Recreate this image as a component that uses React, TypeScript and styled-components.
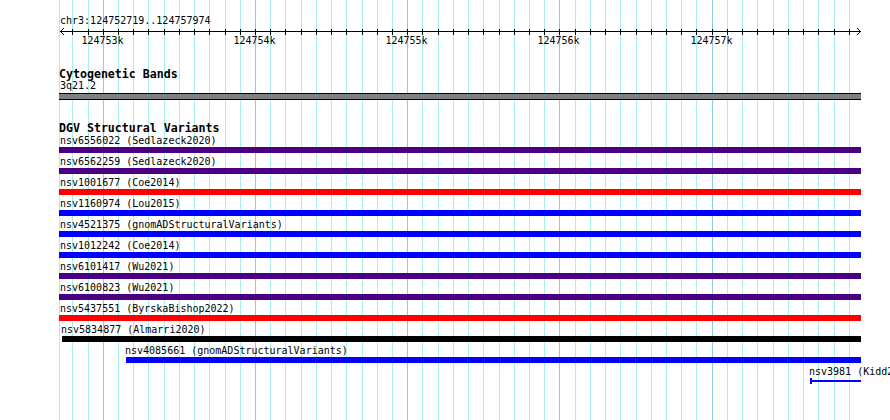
import React from 'react';
import styled, { createGlobalStyle } from 'styled-components';

const VIEW_START = 124752719;
const VIEW_END = 124757974;
const TRACK_LEFT = 59;
const TRACK_WIDTH = 802;
const PAGE_W = 890;
const PAGE_H = 420;
const SCALE = 800 / (VIEW_END - VIEW_START);

// page x (px) of a base position
const toX = (bp: number) => Math.round(60 + (bp - VIEW_START) * SCALE);

const gridStops: number[] = [];
for (let bp = Math.ceil(VIEW_START / 100) * 100; bp < VIEW_END; bp += 100) gridStops.push(bp);

type Variant = {
  id: string;
  study: string;
  color: string;
  start?: number;
  thin?: boolean;
};

const variants: Variant[] = [
  { id: 'nsv6556022', study: 'Sedlazeck2020', color: '#4b0082' },
  { id: 'nsv6562259', study: 'Sedlazeck2020', color: '#4b0082' },
  { id: 'nsv1001677', study: 'Coe2014', color: '#ff0000' },
  { id: 'nsv1160974', study: 'Lou2015', color: '#0000ff' },
  { id: 'nsv4521375', study: 'gnomADStructuralVariants', color: '#0000ff' },
  { id: 'nsv1012242', study: 'Coe2014', color: '#0000ff' },
  { id: 'nsv6101417', study: 'Wu2021', color: '#4b0082' },
  { id: 'nsv6100823', study: 'Wu2021', color: '#4b0082' },
  { id: 'nsv5437551', study: 'ByrskaBishop2022', color: '#ff0000' },
  { id: 'nsv5834877', study: 'Almarri2020', color: '#000000', start: 124752732 },
  { id: 'nsv4085661', study: 'gnomADStructuralVariants', color: '#0000ff', start: 124753153 },
  { id: 'nsv3981', study: 'Kidd2008', color: '#0000ff', start: 124757646, thin: true },
];

const GlobalStyle = createGlobalStyle`
  html, body {
    margin: 0;
    padding: 0;
    background: #fff;
    overflow: hidden;
  }
`;

const Page = styled.div`
  position: relative;
  width: ${PAGE_W}px;
  height: ${PAGE_H}px;
  overflow: hidden;
  background: #fff;
  font-family: 'DejaVu Sans Mono', 'Liberation Mono', monospace;
  color: #000;
`;

const GridLayer = styled.svg`
  position: absolute;
  left: 0;
  top: 0;
  z-index: 0;
`;

const Column = styled.div`
  position: relative;
  z-index: 1;
  display: flex;
  flex-direction: column;
  padding-left: ${TRACK_LEFT}px;
`;

const Locus = styled.div`
  padding: 15px 0 0 1px;
  font-size: 10px;
  line-height: 12px;
  white-space: nowrap;
`;

const RulerSvg = styled.svg`
  display: block;
  overflow: visible;

  text {
    font-family: 'DejaVu Sans Mono', 'Liberation Mono', monospace;
    font-size: 10px;
    fill: #000;
  }
`;

const Track = styled.section<{ $gap: number }>`
  display: flex;
  flex-direction: column;
  margin-top: ${(p) => p.$gap}px;
`;

const TrackTitle = styled.div`
  font-size: 11.6px;
  font-weight: bold;
  line-height: 12px;
  white-space: nowrap;
`;

const Label = styled.div`
  font-size: 10px;
  line-height: 12px;
  white-space: nowrap;
`;

const Band = styled.div`
  margin-top: 1px;
  width: ${TRACK_WIDTH}px;
  height: 5px;
  background: #808080;
  border-top: 1px solid #000;
  border-bottom: 1px solid #000;
`;

const FeatureList = styled.div`
  display: flex;
  flex-direction: column;
  margin-top: 1px;
`;

const FeatureRow = styled.div`
  display: flex;
  flex-direction: column;
  margin-bottom: 3px;
`;

const Bar = styled.div<{ $color: string; $thin?: boolean }>`
  height: 6px;
  background: ${(p) =>
    p.$thin
      ? `linear-gradient(${p.$color}, ${p.$color}) left top / 2px 100% no-repeat,
         linear-gradient(${p.$color}, ${p.$color}) left center / 100% 2px no-repeat`
      : p.$color};
`;

const Grid: React.FC = () => (
  <GridLayer width={PAGE_W} height={PAGE_H}>
    <rect x={TRACK_LEFT} y={0} width={1} height={PAGE_H} fill="#aaeeee" />
    {gridStops.map((bp) => (
      <rect
        key={bp}
        x={toX(bp)}
        y={0}
        width={1}
        height={PAGE_H}
        fill={bp % 1000 === 0 ? '#88ccee' : '#aaeeee'}
      />
    ))}
  </GridLayer>
);

const Ruler: React.FC = () => {
  const end = TRACK_WIDTH;
  return (
    <RulerSvg width={TRACK_WIDTH + 2} height={20}>
      <line x1={1} y1={4.5} x2={end} y2={4.5} stroke="#000" />
      <polyline points="5,1 1.5,4.5 5,8" fill="none" stroke="#000" />
      <polyline points={`${end - 4},1 ${end - 0.5},4.5 ${end - 4},8`} fill="none" stroke="#000" />
      {gridStops.map((bp) => {
        const x = toX(bp) - TRACK_LEFT + 0.5;
        return (
          <g key={bp}>
            <line x1={x} y1={2} x2={x} y2={8} stroke="#000" />
            {bp % 1000 === 0 && (
              <text x={x - 1} y={17} textAnchor="middle">
                {bp / 1000}k
              </text>
            )}
          </g>
        );
      })}
    </RulerSvg>
  );
};

const App: React.FC = () => (
  <>
    <GlobalStyle />
    <Page>
      <Grid />
      <Column>
        <Locus>
          chr3:{VIEW_START}..{VIEW_END}
        </Locus>
        <Ruler />

        <Track $gap={21}>
          <TrackTitle>Cytogenetic Bands</TrackTitle>
          <Label style={{ paddingLeft: 1 }}>3q21.2</Label>
          <Band />
        </Track>

        <Track $gap={22}>
          <TrackTitle>DGV Structural Variants</TrackTitle>
          <FeatureList>
            {variants.map((v) => {
              const offset = v.start ? toX(v.start) - TRACK_LEFT : 0;
              return (
                <FeatureRow key={v.id}>
                  <Label style={{ marginLeft: Math.max(offset - 1, 1) }}>
                    {v.id} ({v.study})
                  </Label>
                  <Bar
                    $color={v.color}
                    $thin={v.thin}
                    style={{ marginLeft: offset, width: TRACK_WIDTH - offset }}
                  />
                </FeatureRow>
              );
            })}
          </FeatureList>
        </Track>
      </Column>
    </Page>
  </>
);

export default App;
